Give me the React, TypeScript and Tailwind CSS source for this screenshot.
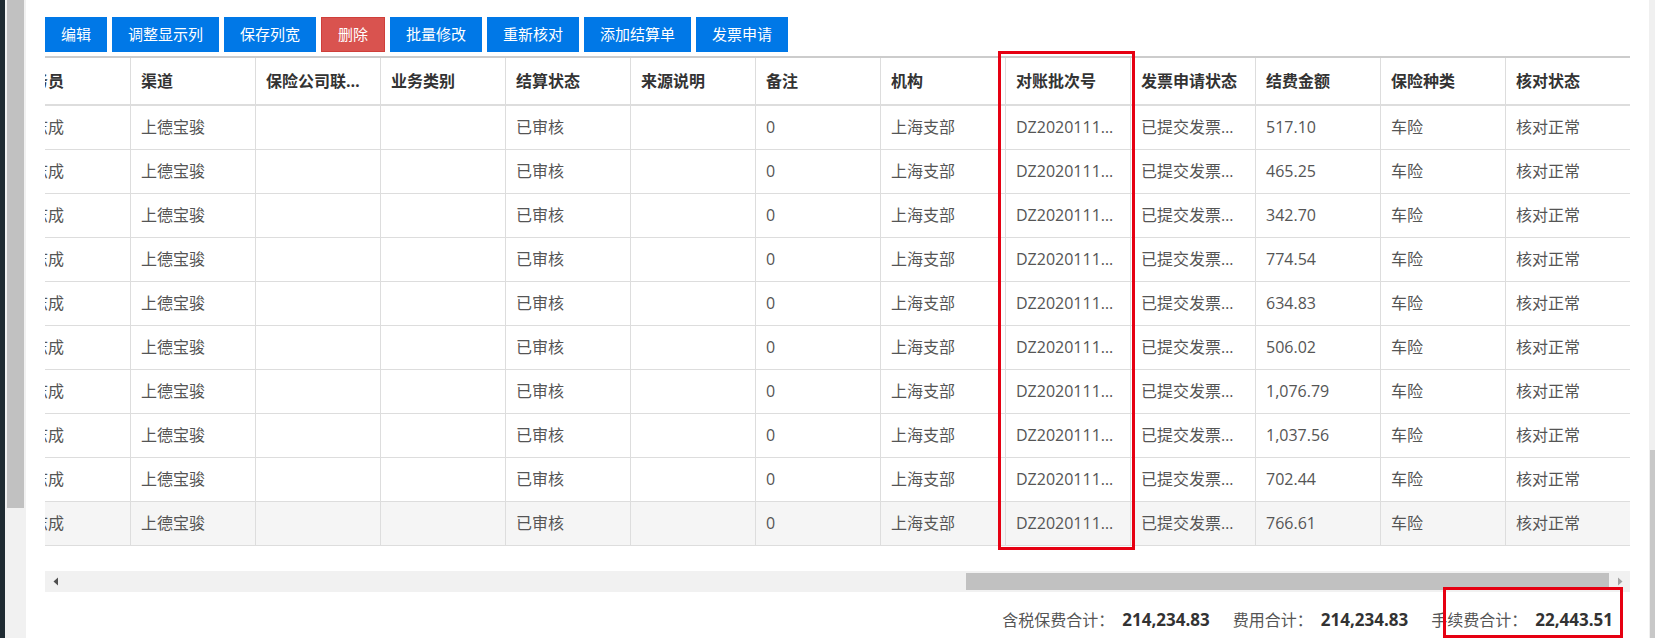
const font = { fontFamily: '"Open Sans", "Noto Sans CJK SC", sans-serif' };

const toolbar = [
  { label: "编辑" },
  { label: "调整显示列" },
  { label: "保存列宽" },
  { label: "删除", danger: true },
  { label: "批量修改" },
  { label: "重新核对" },
  { label: "添加结算单" },
  { label: "发票申请" },
];

const columns = [
  "业务员",
  "渠道",
  "保险公司联系人",
  "业务类别",
  "结算状态",
  "来源说明",
  "备注",
  "机构",
  "对账批次号",
  "发票申请状态",
  "结费金额",
  "保险种类",
  "核对状态",
];

const amounts = [
  "517.10",
  "465.25",
  "342.70",
  "774.54",
  "634.83",
  "506.02",
  "1,076.79",
  "1,037.56",
  "702.44",
  "766.61",
];

const rows = amounts.map((amount, i) => [
  "王志成",
  "上德宝骏",
  "",
  "",
  "已审核",
  "",
  "0",
  "上海支部",
  `DZ20201110000${i + 1}`,
  "已提交发票申请",
  amount,
  "车险",
  "核对正常",
]);

const totals = [
  { label: "含税保费合计：", value: "214,234.83" },
  { label: "费用合计：", value: "214,234.83" },
  { label: "手续费合计：", value: "22,443.51" },
];

export default function App() {
  return (
    <div className="relative flex w-[1655px] h-[638px] overflow-hidden bg-white" style={font}>
      {/* left edge + page scrollbar */}
      <div className="w-[5px] shrink-0 bg-[#1f2b32]" />
      <div className="w-[21px] shrink-0 bg-[#f1f1f1] px-[2px]">
        <div className="h-[508px] bg-[#c1c1c1]" />
      </div>

      <main className="w-[1604px] shrink-0 pl-[19px] pt-[17px]">
        {/* toolbar */}
        <div className="flex gap-[5px]">
          {toolbar.map((b) => (
            <button
              key={b.label}
              className={
                b.danger
                  ? "h-[35px] px-4 text-[15px] text-white bg-[#d9534f] border border-[#cf3f3a]"
                  : "h-[35px] px-4 text-[15px] text-white bg-[#0078e7]"
              }
            >
              {b.label}
            </button>
          ))}
        </div>

        {/* table */}
        <div className="mt-[4px] w-[1585px] overflow-hidden">
          <div className="-ml-[39px] w-[1625px] text-[16px]">
            <div className="flex h-[50px] border-t-2 border-b-2 border-t-[#cccccc] border-b-[#dddddd]">
              {columns.map((c) => (
                <div
                  key={c}
                  className="w-[125px] shrink-0 truncate border-r border-[#dddddd] px-[10px] leading-[46px] font-bold text-[#333]"
                >
                  {c}
                </div>
              ))}
            </div>
            {rows.map((r, i) => (
              <div
                key={i}
                className={
                  i === rows.length - 1
                    ? "flex h-[44px] border-b border-[#dddddd] bg-[#f5f5f5]"
                    : "flex h-[44px] border-b border-[#dddddd]"
                }
              >
                {r.map((cell, j) => (
                  <div
                    key={j}
                    className="w-[125px] shrink-0 truncate border-r border-[#dddddd] px-[10px] leading-[43px] text-[#555]"
                  >
                    {cell}
                  </div>
                ))}
              </div>
            ))}
          </div>
        </div>

        {/* horizontal scrollbar */}
        <div className="mt-[25px] flex h-[21px] w-[1585px] bg-[#f1f1f1]">
          <div className="flex w-[21px] items-center justify-center">
            <svg width="6" height="9" viewBox="0 0 6 9">
              <path d="M5 0.5 L0.5 4.5 L5 8.5 Z" fill="#505050" />
            </svg>
          </div>
          <div className="flex flex-1 items-center">
            <div className="ml-[900px] h-[17px] flex-1 bg-[#c1c1c1]" />
          </div>
          <div className="flex w-[21px] items-center justify-center">
            <svg width="6" height="9" viewBox="0 0 6 9">
              <path d="M1 0.5 L5.5 4.5 L1 8.5 Z" fill="#a3a3a3" />
            </svg>
          </div>
        </div>

        {/* totals */}
        <div className="mt-[16px] flex w-[1585px] justify-end gap-[23px] pr-[17px] text-[16px] leading-6">
          {totals.map((t) => (
            <div key={t.label} className="flex items-center">
              <span className="text-[#555]">{t.label}</span>
              <span className="ml-[8px] text-[17px] font-bold text-[#333]">{t.value}</span>
            </div>
          ))}
        </div>
      </main>

      {/* right page scrollbar */}
      <div className="ml-auto w-[6px] shrink-0 bg-[#f0f0f0] pl-[1px]">
        <div className="mt-[450px] h-[188px] bg-[#c8c8c8]" />
      </div>

      {/* annotation boxes */}
      <div className="absolute left-[998px] top-[51px] h-[499px] w-[137px] border-[3px] border-[#e60012]" />
      <div className="absolute left-[1443px] top-[587px] h-[51px] w-[180px] border-[3px] border-[#e60012]" />
    </div>
  );
}
